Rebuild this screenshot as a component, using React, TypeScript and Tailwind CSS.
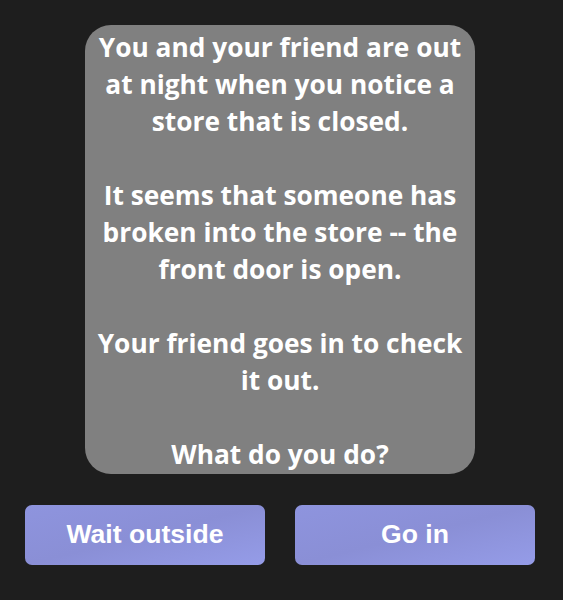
const App = () => {
    const choices = ["Wait outside", "Go in"];

    return (
        <div className="min-h-screen w-full bg-[#1e1e1e]">
            <div className="flex w-[560px] flex-col items-center pt-[25px]">
                <div
                    className="h-[449px] w-[390px] rounded-[26px] bg-[#808080] px-[10px] pt-[4px] text-center text-[26.3px] font-bold leading-[37px] text-white"
                    style={{ fontFamily: '"Open Sans", sans-serif' }}
                >
                    You and your friend are out at night when you notice a store that is closed.
                    <br />
                    <br />
                    It seems that someone has broken into the store -- the front door is open.
                    <br />
                    <br />
                    Your friend goes in to check it out.
                    <br />
                    <br />
                    What do you do?
                </div>
                <div className="mt-[31px] flex gap-[30px]">
                    {choices.map((label, index) => (
                        <button
                            key={index}
                            className="h-[60px] w-[240px] rounded-[7px] bg-gradient-to-br from-[#8e94de] via-[#8a8fd6] to-[#959ce8] text-[26.6px] font-bold text-white"
                            style={{ fontFamily: '"Liberation Sans", Arial, sans-serif' }}
                        >
                            {label}
                        </button>
                    ))}
                </div>
            </div>
        </div>
    );
};

export default App;
